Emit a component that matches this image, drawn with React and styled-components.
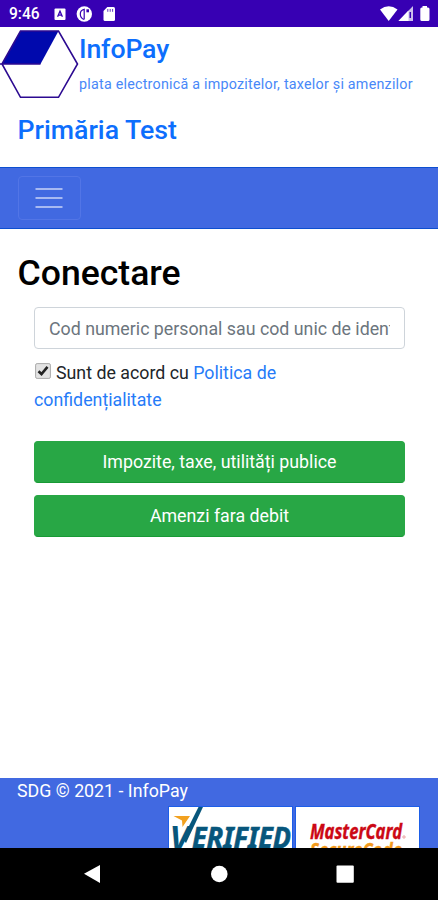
import React from "react";
import styled, { createGlobalStyle } from "styled-components";

const GlobalStyle = createGlobalStyle`
* { box-sizing : border-box; }
body {
margin : 0px;
background-color : #fff;
color : #212529;
font-family : Roboto, "Noto Sans", sans-serif;
font-size : 17.8px;
line-height : 26.8px;
overflow : hidden;
}
`;

const Container = styled.div`
display : flex;
flex-direction : column;
width : 438px;
height : 900px;
overflow : hidden;
`;
const StatusBar = styled.div`
display : flex;
justify-content : space-between;
flex : none;
height : 27px;
padding-left : 9px;
background-color : #3700b3;
color : #fff;
`;
const Clock = styled.span`
width : 45px;
font-size : 15.6px;
line-height : 29px;
font-weight : 500;
`;
const StatusGroup = styled.div`
display : flex;
`;
const Header = styled.header`
flex : none;
height : 140px;
`;
const Brand = styled.div`
display : flex;
height : 72px;
`;
const BrandText = styled.div`
white-space : nowrap;
color : #0d6efd;
`;
const BrandName = styled.div`
margin-top : 6px;
font-size : 26.7px;
line-height : 32px;
font-weight : 500;
letter-spacing : -0.15px;
`;
const Tagline = styled.div`
margin-top : 6px;
font-size : 14.3px;
line-height : 26px;
letter-spacing : 0.23px;
color : #4888f8;
`;
const Town = styled.h4`
margin : 15px 0px 0px 17.5px;
font-size : 26.7px;
line-height : 32px;
font-weight : 500;
color : #0d6efd;
`;
const Navbar = styled.nav`
display : flex;
align-items : center;
flex : none;
height : 62px;
padding-left : 18px;
background-color : #4169e1;
border-top : 1px solid #0d4fd0;
border-bottom : 1px solid #0d4fd0;
`;
const Toggler = styled.button`
display : flex;
align-items : center;
justify-content : center;
width : 63px;
height : 44px;
padding : 0px 1px 0px 0px;
background : none;
border : 1px solid #5275e6;
border-radius : 4px;
`;
const Main = styled.main`
flex : 1;
padding : 23px 33px 0px 34px;
`;
const Title = styled.h2`
margin : 0px 0px 12px -16.5px;
font-size : 35.6px;
line-height : 43px;
font-weight : 500;
color : #000;
`;
const Input = styled.input`
display : block;
width : 100%;
height : 42px;
padding : 0px 14px;
border : 1px solid #ced4da;
border-radius : 4px;
font-family : inherit;
font-size : 17.8px;
&::placeholder {
color : #6c757d;
opacity : 1;
}
`;
const Agree = styled.label`
display : block;
width : 290px;
margin-top : 11px;
`;
const CheckBox = styled.span`
display : inline-block;
width : 16px;
height : 16px;
margin : 0px 5px 0px 1px;
vertical-align : 0px;
line-height : 0;
`;
const Link = styled.a`
color : #267bf8;
text-decoration : none;
`;
const Button = styled.button`
display : block;
width : 100%;
height : 42px;
margin-top : ${(props) => props.$top}px;
padding : 0px;
border : 1px solid #28a745;
border-bottom-color : #189a35;
border-radius : 4px;
background-color : #28a745;
color : #fff;
font-family : inherit;
font-size : 17.8px;
`;
const Footer = styled.footer`
flex : none;
height : 70px;
overflow : hidden;
background-color : #4169e1;
color : #fff;
`;
const Copyright = styled.div`
height : 29px;
padding-left : 17px;
`;
const Cards = styled.div`
display : flex;
justify-content : flex-end;
gap : 4px;
padding-right : 19px;
`;
const Card = styled.div`
width : 123px;
height : 62px;
background-color : #fff;
box-shadow : 0px 0px 0px 1px #1d5ee8;
`;
const SystemNav = styled.div`
display : flex;
flex : none;
height : 52px;
background-color : #000;
`;

const StatusLeft = () => (
  <svg width="70" height="27" viewBox="54 0 70 27">
    <rect x="54.5" y="8.5" width="11" height="11.5" rx="1" fill="#fff" />
    <path d="M57.6 16.8 L60 11.2 L62.4 16.8 M58.5 15.2 H61.5" stroke="#3700b3" strokeWidth="1.3" fill="none" />
    <circle cx="84.3" cy="14" r="7.7" fill="#fff" />
    <path d="M84 19.5 Q80.3 18 80.3 14 Q80.3 10 84.2 9.3 V19.5" stroke="#3700b3" strokeWidth="1.2" fill="none" />
    <path d="M86.4 9.3 H89 V12.3 H86.4 Z" fill="#3700b3" />
    <path d="M107.3 7 H113.5 Q115 7 115 8.5 V19.5 Q115 21 113.5 21 H105 Q103.5 21 103.5 19.5 V11 Z" fill="#fff" />
    <path d="M107.8 9 V11.8 M110.2 9 V11.8 M112.6 9 V11.8" stroke="#3700b3" strokeWidth="0.8" />
  </svg>
);

const StatusRight = () => (
  <svg width="60" height="27" viewBox="378 0 60 27">
    <path d="M380 9.5 Q388.7 2.8 397.5 9.5 L388.7 21 Z" fill="#fff" />
    <path d="M413 6 V21 H398.5 Z" fill="#fff" opacity="0.75" />
    <path d="M408.5 10.5 V21 H398.5 Z" fill="#fff" />
    <path d="M410.3 12 V18" stroke="#3700b3" strokeWidth="1.5" />
    <path d="M422.5 7.5 V6 H427 V7.5 H428 Q429.5 7.5 429.5 9 V19.5 Q429.5 21 428 21 H421.8 Q420.3 21 420.3 19.5 V9 Q420.3 7.5 421.8 7.5 Z" fill="#fff" />
  </svg>
);

const Logo = () => (
  <svg width="79" height="72" viewBox="0 27 79 72">
    <path d="M2 64 L20.5 31 H58.5 L40.5 64 Z" fill="#0009ad" />
    <path d="M0 64 H40.5 M2 64 L20.5 31 H58.5 L77.5 64 L58.5 97.3 H20.5 Z" fill="none" stroke="#2c0a91" strokeWidth="1.6" />
  </svg>
);

const Verified = () => (
  <svg width="123" height="41" viewBox="169 807 123 41">
    <path d="M173.5 816 H190 L182.5 827 L182 820.5 Z" fill="#f2a11f" />
    <g fill="#07567c" fontFamily="Noto Sans, sans-serif" fontWeight="700" fontStyle="italic">
      <text x="169.5" y="850" fontSize="34">V</text>
      <text x="192" y="848" fontSize="28.5" stroke="#07567c" strokeWidth="0.6" textLength="99" lengthAdjust="spacingAndGlyphs">ERIFIED</text>
    </g>
    {/* swoosh running up from the V */}
    <path d="M198.5 807 H203 L186 843 L182.5 839 Z" fill="#07567c" />
  </svg>
);

const MasterCard = () => (
  <svg width="123" height="41" viewBox="296 807 123 41">
    <g fontFamily="Noto Sans, sans-serif" fontWeight="700" fontStyle="italic">
      <text x="310" y="838.5" fontSize="21" fill="#cc0814" stroke="#cc0814" strokeWidth="0.4" textLength="92" lengthAdjust="spacingAndGlyphs">MasterCard</text>
      <text x="310" y="857.5" fontSize="21" fill="#f39a1c" stroke="#f39a1c" strokeWidth="0.4" textLength="92" lengthAdjust="spacingAndGlyphs">SecureCode</text>
    </g>
    <circle cx="404" cy="837" r="1.2" fill="none" stroke="#d66" strokeWidth="0.6" />
  </svg>
);

export default function App() {
  return (
    <Container>
      <GlobalStyle />
      <StatusBar>
        <StatusGroup>
          <Clock>9:46</Clock>
          <StatusLeft />
        </StatusGroup>
        <StatusRight />
      </StatusBar>
      <Header>
        <Brand>
          <Logo />
          <BrandText>
            <BrandName>InfoPay</BrandName>
            <Tagline>plata electronică a impozitelor, taxelor și amenzilor</Tagline>
          </BrandText>
        </Brand>
        <Town>Primăria Test</Town>
      </Header>
      <Navbar>
        <Toggler aria-label="Meniu">
          <svg width="28" height="22" viewBox="0 0 28 22">
            <path d="M0.5 2 H27.5 M0.5 11 H27.5 M0.5 20 H27.5" stroke="#a7b9f2" strokeWidth="1.8" />
          </svg>
        </Toggler>
      </Navbar>
      <Main>
        <Title>Conectare</Title>
        <Input type="text" placeholder="Cod numeric personal sau cod unic de identificare" />
        <Agree>
          <CheckBox>
            <svg width="16" height="16" viewBox="0 0 16 16">
              <rect x="0.6" y="0.6" width="14.8" height="14.8" rx="1.5" fill="#e3e3e3" stroke="#aaa" />
              <path d="M3.5 8.2 L6.5 11 L12.5 3.8" fill="none" stroke="#222" strokeWidth="2.6" />
            </svg>
          </CheckBox>
          Sunt de acord cu <Link>Politica de confidențialitate</Link>
        </Agree>
        <Button $top={27}>Impozite, taxe, utilități publice</Button>
        <Button $top={12}>Amenzi fara debit</Button>
      </Main>
      <Footer>
        <Copyright>SDG © 2021 - InfoPay</Copyright>
        <Cards>
          <Card><Verified /></Card>
          <Card><MasterCard /></Card>
        </Cards>
      </Footer>
      <SystemNav>
        <svg width="438" height="52" viewBox="0 848 438 52" fill="#fff">
          <path d="M84 873.7 L100 865 V883 Z" />
          <circle cx="219.3" cy="874" r="8.3" />
          <rect x="336.5" y="865.5" width="17.3" height="17.3" rx="1" />
        </svg>
      </SystemNav>
    </Container>
  );
}
